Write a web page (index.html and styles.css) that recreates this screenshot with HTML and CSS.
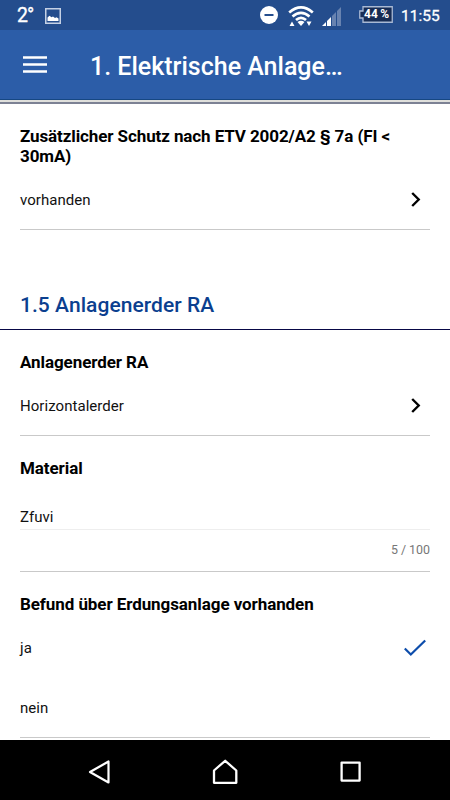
FILE: index.html
```html
<!DOCTYPE html>
<html lang="de">
<head>
<meta charset="utf-8">
<title>1. Elektrische Anlage</title>
<link rel="stylesheet" href="styles.css">
</head>
<body>
<div class="screen">
  <div class="status">
    <span class="temp">2°</span>
    <svg class="picture" width="16" height="16" viewBox="0 0 16 16"><rect x=".75" y=".75" width="14.5" height="14.5" fill="none" stroke="#c5d1e5" stroke-width="1.5"/><path d="M2.500 13V9.500l2-1.700 2 1.500L8 8.500l2 1.500 1.500-.7L13.500 10.500V13z" fill="#fff"/></svg>
    <svg class="dnd" width="18" height="18" viewBox="0 0 18 18"><circle cx="9" cy="9" r="9" fill="#fff"/><path d="M4.500 9h9" stroke="#244d8d" stroke-width="2"/></svg>
    <svg class="wifi" width="26" height="21" viewBox="0 0 26 21"><g fill="none" stroke="#fff" stroke-width="2.700"><path d="M1.200 6.500Q13-3.600 24.800 6.500"/><path d="M4.500 10.500Q13 3.200 21.500 10.500"/><path d="M8 14Q13 9.600 18 14"/></g><path d="M9.500 16Q13 13.500 16.500 16L13 20z" fill="#fff"/><path d="M1.500 20l2.500-4.500L6.500 20zM18.500 15.500h5L21 20z" fill="#fff"/></svg>
    <svg class="signal" width="19" height="19" viewBox="0 0 19 19"><path d="M0 19L4 15v4zM5 14L9 10v9H5z" fill="#fff"/><path d="M10 9L14 5v14h-4zM15 4L19 0v19h-4z" fill="#6883b0"/></svg>
    <div class="battery"><svg width="34" height="17" viewBox="0 0 34 17"><path d="M4 .75h29.250v15.500H4V12H.750V5H4z" fill="#172c54" stroke="#a9b9d4" stroke-width="1.300"/></svg><span class="charge">44&#8201;%</span></div>
    <span class="clock">11:55</span>
  </div>
  <header class="header">
    <svg class="menu" width="24" height="17" viewBox="0 0 24 17"><path d="M0 1.500h24M0 8.500h24M0 15.500h24" stroke="#fff" stroke-width="2.400"/></svg>
    <h1 class="title">1. Elektrische Anlage…</h1>
  </header>
  <main class="content">
    <section class="field">
      <h3 class="label label-wrap">Zusätzlicher Schutz nach ETV 2002/A2 § 7a (FI &lt;<br>30mA)</h3>
      <div class="row"><span>vorhanden</span><svg class="chevron" width="10" height="16" viewBox="0 0 10 16"><path d="M1.200 2L7.700 8.500 1.200 15" fill="none" stroke="#000" stroke-width="2.400"/></svg></div>
    </section>
    <h2 class="heading"><span>1.5 Anlagenerder RA</span></h2>
    <section class="field">
      <h3 class="label">Anlagenerder RA</h3>
      <div class="row"><span>Horizontalerder</span><svg class="chevron" width="10" height="16" viewBox="0 0 10 16"><path d="M1.200 2L7.700 8.500 1.200 15" fill="none" stroke="#000" stroke-width="2.400"/></svg></div>
    </section>
    <section class="field">
      <h3 class="label">Material</h3>
      <div class="input">Zfuvi</div>
      <div class="counter">5 / 100</div>
    </section>
    <section class="field">
      <h3 class="label">Befund über Erdungsanlage vorhanden</h3>
      <div class="row option"><span>ja</span><svg class="check" width="24" height="18" viewBox="0 0 24 18"><path d="M1.800 9.500l6 6L22.200 1.500" fill="none" stroke="#0d4dab" stroke-width="2.200"/></svg></div>
      <div class="row"><span>nein</span></div>
    </section>
  </main>
  <nav class="nav">
    <svg width="24" height="26" viewBox="0 0 24 26"><path d="M2 13L20.500 2.500v21z" fill="none" stroke="#fff" stroke-width="2.200" stroke-linejoin="round"/></svg>
    <svg class="home" width="26" height="26" viewBox="0 0 26 26"><path d="M2 11.500L13.200 1.800 24.300 11.500v12.300H2z" fill="none" stroke="#fff" stroke-width="2.300" stroke-linejoin="round"/></svg>
    <svg width="22" height="22" viewBox="0 0 22 22"><rect x="1.600" y="1.600" width="18" height="18" fill="none" stroke="#fff" stroke-width="2.300" stroke-linejoin="round"/></svg>
  </nav>
</div>
</body>
</html>
```

FILE: styles.css
```css
* { box-sizing: border-box; }
body { margin: 0; background: #fff; font-family: Roboto, "Liberation Sans", sans-serif; color: #000; }
h1, h2, h3 { margin: 0; }
svg { display: block; flex: none; }
.screen { width: 450px; height: 800px; display: flex; flex-direction: column; overflow: hidden; }
.status { height: 30px; flex: none; display: flex; align-items: center; padding: 0 10px 0 17px; background: #244d8d; color: #fff; }
.temp { width: 28px; padding-top: 1px; font-size: 19.5px; line-height: 30px; font-weight: 400; letter-spacing: -1px; -webkit-text-stroke: 0.3px #fff; }
.picture { margin-top: 1px; }
.dnd { margin-left: auto; }
.wifi { margin-left: 10px; margin-top: 2px; }
.signal { margin-left: 8px; margin-top: 2px; }
.battery { display: grid; margin-left: 18px; margin-top: -1px; }
.battery > * { grid-area: 1 / 1; }
.charge { padding-left: 5px; font-size: 12px; line-height: 17px; font-weight: 700; white-space: nowrap; }
.clock { width: 39px; margin-left: 8px; padding-top: 1px; font-size: 15.5px; line-height: 32px; font-weight: 400; white-space: nowrap; -webkit-text-stroke: 0.3px #fff; }
.header { height: 74px; flex: none; display: flex; align-items: center; padding: 0 23px; background: linear-gradient(#2c5da8 69px, #164783 69px, #164783 70px, #e0e0dc 70px, #e0e0dc 72px, #7d8294 72px); color: #fff; }
.menu { margin-top: -5px; }
.title { margin-left: 43px; font-size: 25px; line-height: 30px; font-weight: 500; white-space: nowrap; }
.content { height: 636px; flex: none; overflow: hidden; }
.field { margin: 0 20px; padding-top: 22px; border-bottom: 1px solid #c9c9c9; }
.label { font-size: 17px; line-height: 20px; font-weight: 700; letter-spacing: -0.08px; white-space: nowrap; }
.label-wrap { letter-spacing: -0.1px; }
.row { height: 59px; display: flex; align-items: center; justify-content: space-between; font-size: 15px; line-height: 20px; letter-spacing: 0.05px; color: #111; }
.label + .row { margin-top: 4px; }
.row.option { height: 60px; }
.chevron { margin: -1px 9px 0 0; }
.check { margin-right: 3px; }
.heading { height: 100px; padding: 61px 20px 0; border-bottom: 1px solid #080846; color: #0b3f8f; font-size: 21px; line-height: 28px; font-weight: 500; letter-spacing: 0.05px; }
.input { margin-top: 29px; height: 23px; border-bottom: 1px solid #eee; font-size: 15px; line-height: 20px; color: #111; }
.counter { height: 41px; padding-top: 10px; text-align: right; font-size: 12.4px; line-height: 20px; color: #777; }
.nav { height: 60px; flex: none; display: flex; align-items: center; justify-content: space-between; padding: 4px 88px 0; background: #000; }
.home { margin-right: 2px; }
```
